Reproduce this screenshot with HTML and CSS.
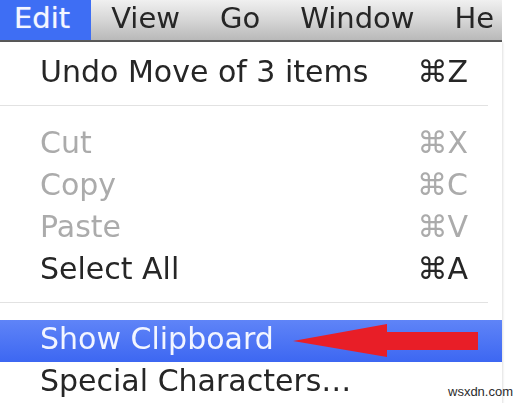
FILE: index.html
```html
<!DOCTYPE html>
<html>
<head>
<meta charset="utf-8">
<link rel="stylesheet" href="styles.css">
</head>
<body>
<div class="screen">
  <div class="menubar">
    <span class="mb-item mb-active">Edit</span>
    <span class="mb-item">View</span>
    <span class="mb-item">Go</span>
    <span class="mb-item">Window</span>
    <span class="mb-item">He</span>
  </div>
  <div class="menu">
    <div class="row"><span class="label">Undo Move of 3 items</span><span class="key">⌘Z</span></div>
    <div class="sep"></div>
    <div class="row disabled"><span class="label">Cut</span><span class="key">⌘X</span></div>
    <div class="row disabled"><span class="label">Copy</span><span class="key">⌘C</span></div>
    <div class="row disabled"><span class="label">Paste</span><span class="key">⌘V</span></div>
    <div class="row"><span class="label">Select All</span><span class="key">⌘A</span></div>
    <div class="sep sep2"></div>
    <div class="row selected"><span class="label">Show Clipboard</span></div>
    <div class="row"><span class="label">Special Characters…</span></div>
  </div>
  <svg class="arrow" width="522" height="403" viewBox="0 0 522 403">
    <polygon points="293,341 387,324 387,332 478,332 478,350 387,350 387,357" fill="#e81e27"/>
  </svg>
  <div class="watermark">wsxdn.com</div>
</div>
</body>
</html>
```
FILE: styles.css
```css
html, body {
  margin: 0;
  padding: 0;
  background: #ffffff;
}
.screen {
  position: relative;
  width: 522px;
  height: 403px;
  overflow: hidden;
  background: #ffffff;
  font-family: "DejaVu Sans", "Liberation Sans", sans-serif;
}
.menubar {
  display: flex;
  width: 502px;
  height: 40px;
  border-bottom: 2px solid #5a5a5a;
  background: linear-gradient(#f0f0f0, #d6d6d6 50%, #b9b9b9);
  overflow: hidden;
  white-space: nowrap;
}
.mb-item {
  font-size: 29px;
  line-height: 36px;
  padding: 0 20px 4px 20px;
  color: #262626;
  filter: blur(0.5px);
}
.mb-active {
  padding-left: 14px;
  padding-right: 21px;
  color: #f4f6ff;
  background: #3e6ef4;
  filter: none;
  text-shadow: 0 0 1px rgba(255,255,255,0.6);
}
.menu {
  width: 502px;
  padding-top: 11px;
  background: #ffffff;
  box-shadow: 1px 0 2px rgba(0,0,0,0.12);
  height: 360px;
}
.row {
  display: flex;
  justify-content: space-between;
  height: 42px;
  box-sizing: border-box;
  padding: 0 34px 5px 40px;
  font-size: 30px;
  line-height: 37px;
  color: #262626;
  white-space: nowrap;
}
.row .label, .row .key {
  filter: blur(0.45px);
}
.row.disabled {
  color: #ababab;
}
.row.selected {
  background: linear-gradient(#5f84f7, #3d67f2);
  color: #f2f5ff;
}
.sep {
  height: 29px;
  box-sizing: border-box;
  padding-top: 10px;
}
.sep::before {
  content: "";
  display: block;
  height: 1px;
  margin-right: 14px;
  background: #e2e2e2;
}
.sep2 {
  height: 28px;
}
.arrow {
  position: absolute;
  left: 0;
  top: 0;
  filter: blur(0.4px);
}
.watermark {
  position: absolute;
  left: 448px;
  top: 384px;
  font-family: "Liberation Sans", Arial, sans-serif;
  font-size: 13px;
  color: #2b2b2b;
}
```
